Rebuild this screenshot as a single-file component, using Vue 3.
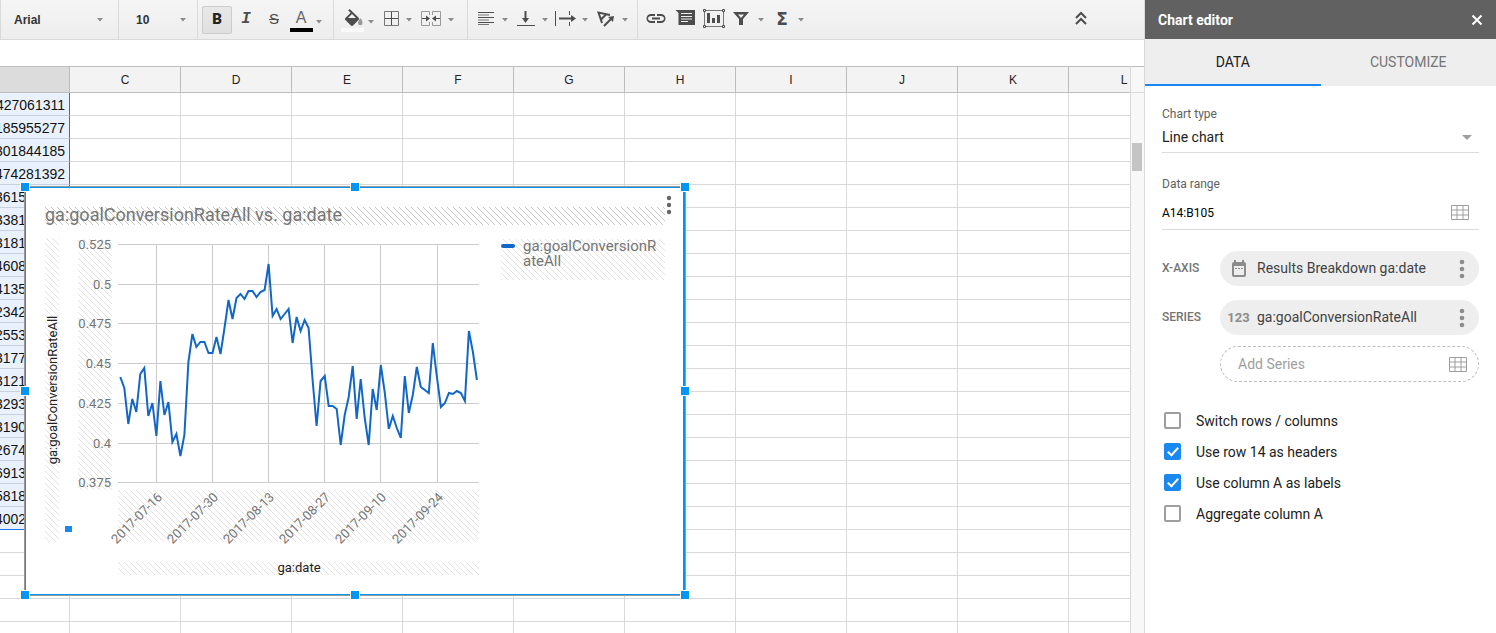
<template>
  <div class="app">
    <main class="workspace">
      <div class="toolbar" role="toolbar" aria-label="Formatting">
        <div class="group font-group">
          <select class="tool-select" aria-label="Font">
            <option>Arial</option>
          </select>
          <svg class="caret" viewBox="0 0 6 4"><path d="M0 0h6L3 3.5z" /></svg>
        </div>
        <div class="group size-group">
          <select class="tool-select" aria-label="Font size">
            <option>10</option>
          </select>
          <svg class="caret" viewBox="0 0 6 4"><path d="M0 0h6L3 3.5z" /></svg>
        </div>

        <div class="group text-group">
          <button class="tool wide active" aria-label="Bold"><span class="g-bold">B</span></button>
          <button class="tool" aria-label="Italic"><span class="g-italic">I</span></button>
          <button class="tool" aria-label="Strikethrough"><span class="g-strike">S</span></button>
          <button class="tool narrow" aria-label="Text color"><span class="g-color">A</span></button>
          <button class="drop low" aria-label="More text colors"><svg class="caret" viewBox="0 0 6 4"><path d="M0 0h6L3 3.5z" /></svg></button>
        </div>

        <div v-for="(group, gi) in iconGroups" :key="gi" class="group" :class="group.name">
          <template v-for="tool in group.tools" :key="tool.label">
            <button class="tool" :class="tool.size" :aria-label="tool.label">
              <span v-if="tool.text" class="g-sigma">{{ tool.text }}</span>
              <svg v-else class="icon" viewBox="0 0 24 24">
                <path v-for="(p, pi) in tool.paths" :key="pi" :class="p.c" :d="p.d" />
              </svg>
            </button>
            <button v-if="tool.drop" class="drop" :class="tool.drop" :aria-label="tool.label + ' options'">
              <svg class="caret" viewBox="0 0 6 4"><path d="M0 0h6L3 3.5z" /></svg>
            </button>
          </template>
        </div>

        <button class="tool collapse" aria-label="Hide menus">
          <svg class="icon" viewBox="0 0 24 24"><path class="chevron" d="M7 10l5-5 5 5M7 16l5-5 5 5" /></svg>
        </button>
      </div>

      <div class="formula-bar"></div>

      <div class="sheet">
        <div class="grid-view">
          <table class="grid">
            <thead>
              <tr>
                <th class="selected"></th>
                <th v-for="c in columns" :key="c">{{ c }}</th>
              </tr>
            </thead>
            <tbody>
              <tr v-for="r in 24" :key="r">
                <td :class="{ selected: r <= rates.length, last: r === rates.length }">{{ rates[r - 1] }}</td>
                <td v-for="c in columns" :key="c"></td>
              </tr>
            </tbody>
          </table>
        </div>
        <div class="scrollbar">
          <div class="scroll-head"></div>
          <div class="thumb"></div>
        </div>

        <div class="chart">
          <svg class="plot" viewBox="0 0 660 408">
            <defs>
              <pattern id="hatch" width="6" height="6" patternUnits="userSpaceOnUse">
                <path class="hatch-line" d="M-1 -1l8 8M-1 5l2 2M5 -1l2 2" />
              </pattern>
              <pattern id="hatchDark" width="6" height="6" patternUnits="userSpaceOnUse">
                <path class="hatch-line dark" d="M-1 -1l8 8M-1 5l2 2M5 -1l2 2" />
              </pattern>
            </defs>

            <rect x="20" y="20" width="620" height="18" fill="url(#hatchDark)" />
            <rect x="20" y="51" width="14" height="304" fill="url(#hatch)" />
            <rect x="53" y="52" width="34" height="251" fill="url(#hatch)" />
            <rect x="93" y="303" width="361" height="52" fill="url(#hatch)" />
            <rect x="93" y="375" width="361" height="13" fill="url(#hatch)" />
            <rect x="476" y="52" width="164" height="41" fill="url(#hatch)" />

            <text class="chart-title" x="20" y="34">ga:goalConversionRateAll vs. ga:date</text>

            <g v-for="(t, i) in yTicks" :key="t">
              <rect class="rule" x="93" :y="tickY(i)" width="361" height="1" />
              <text class="tick" x="86" :y="tickY(i) + 5" text-anchor="end">{{ t }}</text>
            </g>
            <g v-for="(t, i) in xTicks" :key="t">
              <rect class="rule" :x="tickX(i)" y="57" width="1" height="239" />
              <text class="tick" text-anchor="end" :transform="`translate(${tickX(i) + 7} 311) rotate(-45)`">{{ t }}</text>
            </g>

            <polyline class="trend" :points="linePoints" />

            <text class="axis-title" text-anchor="middle" transform="translate(32 203) rotate(-90)">ga:goalConversionRateAll</text>
            <text class="axis-title" x="274" y="385" text-anchor="middle">ga:date</text>

            <rect class="legend-key" x="476" y="57" width="14" height="4" rx="2" />
            <text class="legend" x="498" y="64">ga:goalConversionR</text>
            <text class="legend" x="498" y="79">ateAll</text>
          </svg>
          <button class="chart-menu" aria-label="Chart menu">
            <svg viewBox="0 0 6 20"><circle cx="3" cy="3" r="2.2" /><circle cx="3" cy="10" r="2.2" /><circle cx="3" cy="17" r="2.2" /></svg>
          </button>
          <span class="fill-handle"></span>
          <span v-for="h in handles" :key="h" class="handle" :class="h"></span>
        </div>
      </div>
    </main>

    <aside class="editor">
      <header class="editor-head">
        <h2>Chart editor</h2>
        <button aria-label="Close">
          <svg viewBox="0 0 12 12"><path d="M1.5 1.5l9 9M10.5 1.5l-9 9" /></svg>
        </button>
      </header>
      <nav class="tabs">
        <button :class="{ on: tab === 'data' }" @click="tab = 'data'">DATA</button>
        <button :class="{ on: tab === 'customize' }" @click="tab = 'customize'">CUSTOMIZE</button>
      </nav>

      <div class="editor-body">
        <label class="field-label" for="chart-type">Chart type</label>
        <div class="field type-field">
          <select id="chart-type">
            <option>Line chart</option>
          </select>
          <svg class="type-caret" viewBox="0 0 10 5"><path d="M0 0h10L5 5z" /></svg>
        </div>

        <label class="field-label range-label" for="data-range">Data range</label>
        <div class="field range-field">
          <input id="data-range" v-model="range" type="text" />
          <button class="grid-button" aria-label="Select data range">
            <svg class="grid-icon" viewBox="0 0 18 15"><path :d="gridIcon" /></svg>
          </button>
        </div>

        <div class="series">
          <span class="series-label">X-AXIS</span>
          <div class="pill">
            <span class="pill-icon">
              <svg class="calendar" viewBox="0 0 14 17">
                <path fill-rule="evenodd" d="M2 0h2v2h6V0h2v2a2 2 0 0 1 2 2v11a2 2 0 0 1-2 2H2a2 2 0 0 1-2-2V4a2 2 0 0 1 2-2zM2 6v9h10V6zM3 8h2v1H3zM6 8h2v1H6zM9 8h2v1H9z" />
              </svg>
            </span>
            <span class="pill-text">Results Breakdown ga:date</span>
            <button class="pill-menu" aria-label="X-axis options">
              <svg viewBox="0 0 6 20"><circle cx="3" cy="3" r="2.3" /><circle cx="3" cy="10" r="2.3" /><circle cx="3" cy="17" r="2.3" /></svg>
            </button>
          </div>

          <span class="series-label">SERIES</span>
          <div class="pill">
            <span class="pill-icon digits">123</span>
            <span class="pill-text">ga:goalConversionRateAll</span>
            <button class="pill-menu" aria-label="Series options">
              <svg viewBox="0 0 6 20"><circle cx="3" cy="3" r="2.3" /><circle cx="3" cy="10" r="2.3" /><circle cx="3" cy="17" r="2.3" /></svg>
            </button>
          </div>
        </div>
        <button class="add-series">
          <span>Add Series</span>
          <svg class="grid-icon" viewBox="0 0 18 15"><path :d="gridIcon" /></svg>
        </button>

        <div class="checks">
          <label v-for="o in options" :key="o.label">
            <input v-model="o.on" type="checkbox" />
            <span>{{ o.label }}</span>
          </label>
        </div>
      </div>
    </aside>
  </div>
</template>

<script setup>
import { computed, reactive, ref } from 'vue'

const tab = ref('data')
const range = ref('A14:B105')

const options = reactive([
  { label: 'Switch rows / columns', on: false },
  { label: 'Use row 14 as headers', on: true },
  { label: 'Use column A as labels', on: true },
  { label: 'Aggregate column A', on: false }
])

const columns = 'CDEFGHIJKL'.split('')

const rates = [
  '0.427061311', '0.185955277', '0.301844185', '0.474281392', '0.361529084',
  '0.338140275', '0.318172946', '0.460815327', '0.413507718', '0.234264419',
  '0.255398102', '0.317746235', '0.312180547', '0.329316024', '0.319054713',
  '0.267439861', '0.691370254', '0.581826603', '0.400293175'
]

const handles = ['nw', 'n', 'ne', 'w', 'e', 'sw', 's', 'se']

const yTicks = ['0.525', '0.5', '0.475', '0.45', '0.425', '0.4', '0.375']
const xTicks = ['2017-07-16', '2017-07-30', '2017-08-13', '2017-08-27', '2017-09-10', '2017-09-24']
const tickY = (i) => Math.round(57 + i * 39.7)
const tickX = (i) => Math.round(131 + i * 56.1)

// distance of each day below the 0.525 line
const trend = [
  133, 144, 180, 155, 168, 130, 124, 172, 159, 192, 137, 171, 158, 198, 190, 212, 191, 118,
  90, 103, 98, 98, 109, 109, 93, 110, 84, 56, 75, 54, 50, 55, 47, 47, 53, 48, 46,
  20, 72, 65, 75, 70, 65, 99, 73, 87, 76, 84, 136, 182, 137, 132, 162, 162, 165,
  201, 171, 153, 122, 175, 135, 174, 201, 145, 166, 121, 149, 185, 172, 184, 194,
  132, 169, 151, 123, 143, 146, 149, 99, 133, 163, 159, 149, 150, 147, 149, 157,
  87, 108, 136
]
const linePoints = computed(() =>
  trend.map((y, i) => `${(95.3 + i * 4.007).toFixed(1)},${y + 57}`).join(' ')
)

const gridIcon = 'M.5 .5h17v14h-17zM.5 5h17M.5 10h17M6 .5v14M12 .5v14'

// c picks the stroke / fill style of each path
const iconGroups = [
  {
    name: 'cell-group',
    tools: [
      {
        label: 'Fill color', size: 'narrow', drop: 'low',
        paths: [
          { c: 'solid', d: 'M17.5 9.5L8.6 1 7.2 2.4l2.4 2.4-5.2 5.1c-.6.6-.6 1.5 0 2.1l5.5 5.5c.6.6 1.5.6 2.1 0l5.5-5.5c.6-.6.6-1.5 0-2.500zM7 10L11 6l4 4z' },
          { c: 'pale', d: 'M19.5 10s-2.5 3-2.5 5a2.3 2.3 0 0 0 4.6 0c0-2-2.1-5-2.1-5z' },
          { c: 'white', d: 'M0 20h23v4H0z' }
        ]
      },
      {
        label: 'Borders', size: 'narrow', drop: 'mid',
        paths: [
          { c: 'thin', d: 'M5.5 3.5h14v14h-14z' },
          { c: 'line', d: 'M12.5 4v13M6 10.5h13' }
        ]
      },
      {
        label: 'Merge cells', size: 'wide', drop: 'mid',
        paths: [
          { c: 'faint', d: 'M10.5 7V3.5h-8v14h8V14M13.5 7V3.5h8v14h-8V14' },
          { c: 'line', d: 'M3 10.5h6M21 10.5h-6' },
          { c: 'solid', d: 'M7 7.5l4 3-4 3zM17 7.5l-4 3 4 3z' }
        ]
      }
    ]
  },
  {
    name: 'align-group',
    tools: [
      {
        label: 'Horizontal align', drop: 'mid',
        paths: [
          { c: 'line', d: 'M4 4.5h16M4 9.5h16M4 14.5h16' },
          { c: 'thin', d: 'M4 7h11M4 12h11M4 16.5h11' }
        ]
      },
      {
        label: 'Vertical align', drop: 'mid',
        paths: [
          { c: 'line2', d: 'M11.5 3v10' },
          { c: 'line', d: 'M3 17.5h18' },
          { c: 'solid', d: 'M8 10h7l-3.5 5z' }
        ]
      },
      {
        label: 'Text wrapping', drop: 'mid',
        paths: [
          { c: 'line', d: 'M1.5 3v15M15.5 3v4M15.5 14v4' },
          { c: 'line2', d: 'M5 10.5h13' },
          { c: 'solid', d: 'M17 7l5 3.5-5 3.5z' }
        ]
      },
      {
        label: 'Text rotation', drop: 'mid',
        paths: [
          { c: 'line2', d: 'M16 7L4.5 4.5 8 15M12 6.5l-5 5M10 18l8-8' },
          { c: 'solid', d: 'M14 9l6-1-1 6z' }
        ]
      }
    ]
  },
  {
    name: 'insert-group',
    tools: [
      {
        label: 'Insert link',
        paths: [
          { c: 'solid', d: 'M4 10.5c0-1.4 1.300-2.500 3-2.500h4V6H7a4.500 4.500 0 0 0 0 9h4v-2H7c-1.700 0-3-1.100-3-2.500zm4 1h8v-2H8zm9-5.500h-4v2h4c1.700 0 3 1.100 3 2.500s-1.300 2.500-3 2.500h-4v2h4a4.500 4.500 0 0 0 0-9z' }
        ]
      },
      {
        label: 'Insert comment',
        paths: [
          { c: 'solid', d: 'M3.5 2H23v15H6.5V5z' },
          { c: 'cut', d: 'M9 5.5h11M9 8.5h11M9 11h11M9 13.5h7' }
        ]
      },
      {
        label: 'Insert chart', size: 'wide',
        paths: [
          { c: 'thin', d: 'M5 2.5h16M5 18.5h16M3.5 4v13M22.5 4v13' },
          { c: 'line', d: 'M2.5 1.5h2v2h-2zM21.5 1.5h2v2h-2zM2.5 17.5h2v2h-2zM21.5 17.5h2v2h-2z' },
          { c: 'solid', d: 'M6 5h3v10H6zM11 10h3v5h-3zM16 7h3v8h-3z' }
        ]
      },
      {
        label: 'Filter', drop: 'mid',
        paths: [
          { c: 'hollow', d: 'M3 4h16l-6 7v6h-4v-6zM8 6.5l3 3.5 3-3.5z' }
        ]
      },
      { label: 'Functions', text: 'Σ', drop: 'mid' }
    ]
  }
]
</script>

<style>
body {
  margin: 0;
}
</style>

<style scoped>
.app {
  display: flex;
  height: 100vh;
  overflow: hidden;
  background: #fff;
  font-family: Roboto, "Liberation Sans", sans-serif;
}

button,
select,
input {
  font: inherit;
  color: inherit;
  margin: 0;
  padding: 0;
  border: 0;
  background: none;
  border-radius: 0;
  appearance: none;
  outline: none;
}

.workspace {
  flex: 1;
  min-width: 0;
  display: flex;
  flex-direction: column;
}

/* toolbar */
.toolbar {
  display: flex;
  flex: none;
  height: 39px;
  border-bottom: 1px solid #d9d9d9;
  background: linear-gradient(#f5f5f5, #ededed);
  font-family: "Liberation Sans", Arial, sans-serif;
  color: #4d4d4d;
}

.group {
  display: flex;
  align-items: center;
  border-left: 1px solid #d9d9d9;
  box-sizing: border-box;
}

.font-group {
  width: 118px;
  padding: 0 15px 0 13px;
}

.size-group {
  width: 79px;
  padding: 0 11px 0 17px;
}

.tool-select {
  flex: 1;
  min-width: 0;
  font-size: 12px;
  font-weight: bold;
  color: #333;
}

.text-group {
  width: 136px;
  padding-left: 4px;
}

.cell-group {
  width: 134px;
  padding-left: 6px;
}

.align-group {
  width: 170px;
  padding-left: 4px;
}

.insert-group {
  padding-left: 4px;
}

.tool {
  display: flex;
  align-items: center;
  justify-content: center;
  flex: none;
  box-sizing: border-box;
  width: 28px;
  height: 28px;
}

.tool.narrow {
  width: 26px;
}

.tool.wide {
  width: 30px;
}

.tool.active {
  border: 1px solid #ccc;
  border-radius: 2px;
  background: linear-gradient(#e8e8e8, #e0e0e0);
}

.drop {
  display: flex;
  align-items: center;
  width: 12px;
  height: 28px;
  padding-left: 2px;
}

.drop.low {
  padding-top: 4px;
}

.caret {
  flex: none;
  width: 6px;
  height: 4px;
  fill: #8c8c8c;
}

.icon {
  flex: none;
  width: 24px;
  height: 24px;
  fill: none;
}

.solid {
  fill: #4d4d4d;
}

.hollow {
  fill: #4d4d4d;
  fill-rule: evenodd;
}

.pale {
  fill: #999;
}

.white {
  fill: #fafafa;
}

.line {
  stroke: #4d4d4d;
}

.line2 {
  stroke: #4d4d4d;
  stroke-width: 2;
}

.chevron {
  stroke: #4d4d4d;
  stroke-width: 2;
}

.thin {
  stroke: #777;
}

.faint {
  stroke: #999;
}

.cut {
  stroke: #f0f0f0;
}

.g-bold {
  font-family: Roboto, sans-serif;
  font-size: 15px;
  font-weight: 900;
  line-height: 20px;
  padding-bottom: 2px;
  color: #222;
}

.g-italic {
  font-family: "Liberation Mono", monospace;
  font-size: 16px;
  font-weight: bold;
  font-style: italic;
  padding-bottom: 2px;
}

.g-strike {
  font-size: 15px;
  text-decoration: line-through;
  padding-bottom: 2px;
}

.g-color {
  width: 23px;
  height: 20px;
  border-bottom: 4px solid #000;
  font-size: 16px;
  line-height: 20px;
  color: #666;
}

.g-sigma {
  font-family: "DejaVu Sans", sans-serif;
  font-size: 17px;
  font-weight: bold;
  padding-bottom: 2px;
}

.collapse {
  align-self: center;
  margin: 0 49px 0 auto;
}

.formula-bar {
  flex: none;
  height: 26px;
  background: #fff;
}

/* sheet */
.sheet {
  position: relative;
  flex: 1;
  min-height: 0;
  display: flex;
}

.grid-view {
  flex: 1;
  min-width: 0;
  overflow: hidden;
}

/* scrolled so that column B is cut by the left edge */
.grid {
  width: 1221px;
  margin-left: -41px;
  border-collapse: separate;
  border-spacing: 0;
  table-layout: fixed;
  font-family: "Liberation Sans", Arial, sans-serif;
}

.grid th {
  box-sizing: border-box;
  height: 27px;
  padding: 0;
  border: solid #bdbdbd;
  border-width: 1px 1px 1px 0;
  background: #f3f3f3;
  font-size: 12px;
  font-weight: normal;
  color: #222;
}

.grid th.selected {
  background: #dcdcdc;
}

.grid td {
  box-sizing: border-box;
  height: 23px;
  padding: 2px 4px 0 0;
  border: solid #d9d9d9;
  border-width: 0 1px 1px 0;
  font-size: 14px;
  line-height: 20px;
  text-align: right;
  color: #111;
}

.grid td.selected {
  border-right-color: #1a73e8;
  border-bottom-color: #c9d1de;
  background: #e9f1fd;
}

.grid td.last {
  border-bottom-color: #1a73e8;
}

.scrollbar {
  flex: none;
  width: 13px;
  border-left: 1px solid #d9d9d9;
  background: #f8f8f8;
}

.scroll-head {
  height: 25px;
  border: solid #bdbdbd;
  border-width: 1px 0;
  border-bottom-color: #d9d9d9;
}

.thumb {
  height: 28px;
  margin: 50px 2px 0 1px;
  background: #c4c4c4;
}

/* chart floating on the sheet */
.chart {
  position: absolute;
  left: 25px;
  top: 121px;
  box-sizing: border-box;
  width: 660px;
  height: 408px;
  background: #fff;
  box-shadow: 0 0 0 1px #999;
}

.chart::after {
  content: "";
  position: absolute;
  inset: 0;
  border: solid #0096f5;
  border-width: 1px 2px 1px 1px;
  pointer-events: none;
}

.plot {
  display: block;
  width: 100%;
  height: 100%;
}

.hatch-line {
  fill: none;
  stroke: #e2e2e2;
  stroke-width: 1;
}

.hatch-line.dark {
  stroke: #c8c8c8;
}

.rule {
  fill: #ccc;
}

.trend {
  fill: none;
  stroke: #1166c8;
  stroke-width: 2;
}

.chart-title {
  font-size: 18px;
  fill: #757575;
}

.tick {
  font-size: 13px;
  fill: #757575;
}

.axis-title {
  font-size: 13px;
  fill: #222;
}

.legend {
  font-size: 15px;
  fill: #757575;
}

.legend-key {
  fill: #1166c8;
}

.chart-menu {
  position: absolute;
  top: 8px;
  right: 13px;
  width: 6px;
  height: 20px;
}

.chart-menu svg {
  display: block;
  fill: #666;
}

.fill-handle {
  position: absolute;
  left: 40px;
  top: 339px;
  width: 7px;
  height: 6px;
  background: #1a88f0;
}

.handle {
  position: absolute;
  z-index: 1;
  left: 50%;
  top: 50%;
  width: 8px;
  height: 8px;
  margin: -5px;
  border: 1px solid #fff;
  background: #0096f5;
}

.handle.nw,
.handle.w,
.handle.sw {
  left: 0;
}

.handle.ne,
.handle.e,
.handle.se {
  left: 100%;
}

.handle.nw,
.handle.n,
.handle.ne {
  top: 0;
}

.handle.sw,
.handle.s,
.handle.se {
  top: 100%;
}

/* editor panel */
.editor {
  flex: none;
  width: 351px;
  border-left: 1px solid #d9d9d9;
  background: #fff;
  color: #212121;
}

.editor-head {
  display: flex;
  align-items: center;
  justify-content: space-between;
  height: 39px;
  padding: 0 13px;
  background: #616161;
  color: #fff;
}

.editor-head h2 {
  margin: 0;
  font-size: 14px;
  font-weight: 700;
}

.editor-head svg {
  display: block;
  width: 12px;
  height: 12px;
  stroke: #fff;
  stroke-width: 2;
}

.tabs {
  display: flex;
  height: 47px;
  background: #eee;
}

.tabs button {
  flex: 1;
  border-bottom: 2px solid transparent;
  font-size: 14px;
  color: #757575;
}

.tabs button.on {
  border-color: #1a88f0;
  color: #212121;
}

.editor-body {
  padding: 20px 17px;
}

.field-label {
  display: block;
  font-size: 12px;
  line-height: 16px;
  color: #616161;
}

.range-label {
  margin-top: 23px;
}

.field {
  display: flex;
  align-items: center;
  border-bottom: 1px solid #dcdcdc;
}

.type-field {
  height: 30px;
  padding-right: 7px;
  font-size: 14px;
}

.range-field {
  height: 33px;
  margin-top: 4px;
  padding-right: 10px;
  font-size: 12px;
  color: #000;
}

.field select,
.field input {
  flex: 1;
  min-width: 0;
  height: 24px;
}

.type-caret {
  width: 10px;
  height: 5px;
  fill: #9e9e9e;
}

.grid-icon {
  display: block;
  width: 18px;
  height: 15px;
  fill: none;
  stroke: #9e9e9e;
}

.series {
  display: grid;
  grid-template-columns: 58px 1fr;
  align-items: center;
  row-gap: 14px;
  margin-top: 21px;
}

.series-label {
  padding-bottom: 2px;
  font-size: 12px;
  font-weight: 500;
  color: #757575;
}

.pill {
  display: flex;
  align-items: center;
  gap: 8px;
  height: 35px;
  padding: 0 14px 0 8px;
  border-radius: 18px;
  background: #eee;
  font-size: 14px;
  color: #424242;
}

.pill-icon {
  display: flex;
  justify-content: center;
  width: 21px;
}

.calendar {
  width: 14px;
  height: 17px;
  fill: #8c8c8c;
}

.digits {
  font-size: 13px;
  font-weight: 700;
  color: #8c8c8c;
}

.pill-text {
  flex: 1;
  padding-bottom: 2px;
}

.pill-menu svg {
  display: block;
  width: 6px;
  height: 20px;
  fill: #8c8c8c;
}

.add-series {
  display: flex;
  align-items: center;
  justify-content: space-between;
  box-sizing: border-box;
  width: calc(100% - 58px);
  height: 36px;
  margin: 11px 0 0 58px;
  padding: 0 11px 0 17px;
  border: 1px dashed #bdbdbd;
  border-radius: 18px;
  font-size: 14px;
  color: #9e9e9e;
}

.checks {
  margin-top: 23px;
}

.checks label {
  display: flex;
  align-items: center;
  gap: 15px;
  height: 31px;
  padding-left: 2px;
  font-size: 14px;
}

.checks input {
  display: flex;
  justify-content: center;
  box-sizing: border-box;
  width: 17px;
  height: 17px;
  border: 2px solid #9e9e9e;
  border-radius: 2px;
}

.checks input:checked {
  border-color: #1a88f0;
  background: #1a88f0;
}

.checks input:checked::after {
  content: "";
  width: 4px;
  height: 9px;
  border: solid #fff;
  border-width: 0 2px 2px 0;
  transform: rotate(42deg);
}
</style>
